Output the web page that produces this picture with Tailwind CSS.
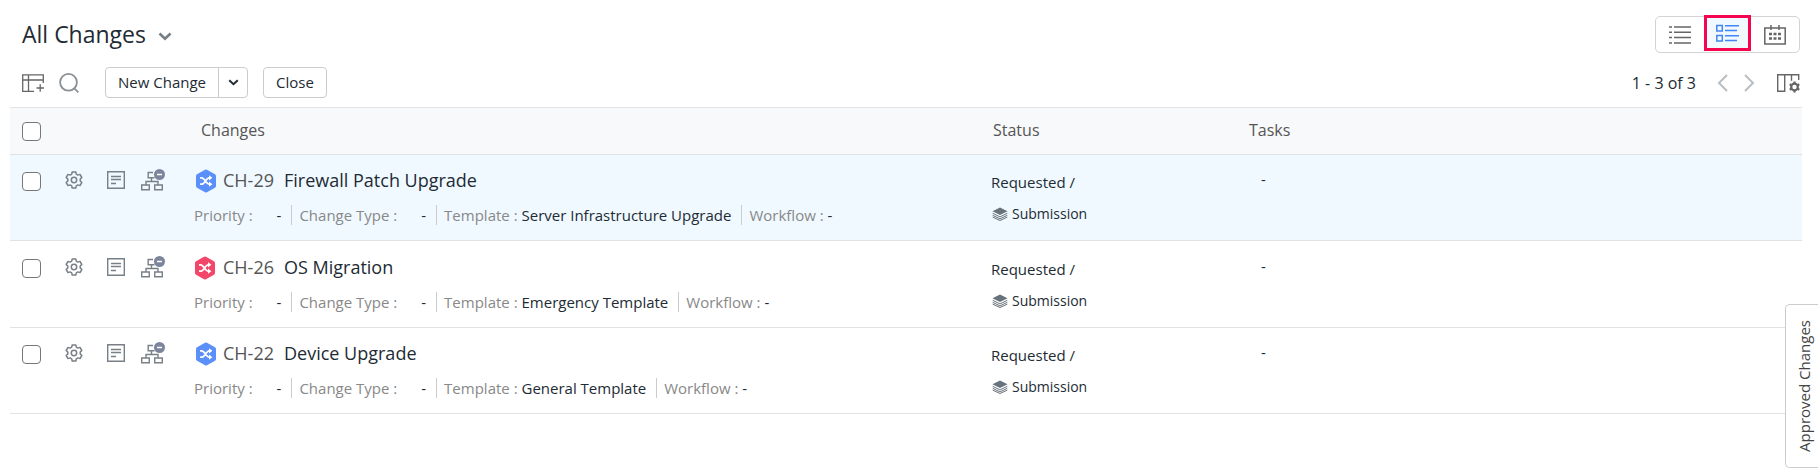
<!DOCTYPE html>
<html lang="en">
<head>
  <meta charset="UTF-8" />
  <meta name="viewport" content="width=device-width, initial-scale=1.0" />
  <title>All Changes</title>
  <script src="https://cdn.jsdelivr.net/npm/@tailwindcss/browser@4"></script>
</head>
<body class="bg-white text-[#222b34] font-['Open_Sans',sans-serif]">
  <!-- Icon sprite -->
  <svg class="hidden" aria-hidden="true">
    <symbol id="gear" viewBox="0 0 18 18">
      <path d="M7.2 1h3.6l.5 2.2 1.5.9 2.2-.7 1.8 3.1-1.6 1.6v1.8l1.6 1.6-1.8 3.1-2.2-.7-1.5.9-.5 2.2H7.2l-.5-2.200-1.500-.9-2.200.7-1.800-3.100 1.600-1.600V8.100L1.200 6.500 3 3.400l2.200.7 1.500-.9z" fill="none" stroke="currentColor" stroke-width="1.500" stroke-linejoin="round" />
      <circle cx="9" cy="9" r="2.700" fill="none" stroke="currentColor" stroke-width="1.500" />
    </symbol>
    <symbol id="note" viewBox="0 0 18 18">
      <path d="M.7.7h16.600v16.600H.7zM4 5.500h10M4 8.500h10M4 12.500h5" fill="none" stroke="currentColor" stroke-width="1.400" />
    </symbol>
    <symbol id="tree" viewBox="0 0 24 22">
      <path d="M12 3.500H7.200v5.300h6.300M10.500 9v3.500M5 16v-3.500h12V16M.7 16h7.600v4.800H.7zM13.700 16h7.600v4.800h-7.600z" fill="none" stroke="currentColor" stroke-width="1.400" />
      <circle cx="18.500" cy="5.500" r="5.500" fill="#7b869c" />
      <path d="M16 5.500h5" stroke="#fff" stroke-width="1.500" />
    </symbol>
    <symbol id="change" viewBox="0 0 22 24">
      <path d="M11 2.500l8 4.400v10.200l-8 4.400-8-4.400V6.900z" fill="currentColor" stroke="currentColor" stroke-width="4" stroke-linejoin="round" />
      <path d="M5 8.800h1.700c3.200 0 4.300 6.400 7.300 6.400h1M5 15.200h1.700c3.200 0 4.300-6.400 7.300-6.400h1" fill="none" stroke="#fff" stroke-width="1.700" />
      <path d="M14 6.200l3.400 2.600-3.400 2.600zM14 12.600l3.400 2.600-3.400 2.600z" fill="#fff" />
    </symbol>
    <symbol id="layers" viewBox="0 0 16 14">
      <path d="M8 .5l7.500 3.700L8 8 .5 4.200z" fill="currentColor" />
      <path d="M.7 6.300L8 9.900l7.300-3.600M.7 8.300L8 11.900l7.300-3.600M.7 10.100L8 13.500l7.300-3.400" fill="none" stroke="currentColor" />
    </symbol>
    <symbol id="chevron" viewBox="0 0 14 9">
      <path d="M1.500 1.500L7 6.700l5.500-5.200" fill="none" stroke="currentColor" stroke-width="2.600" />
    </symbol>
  </svg>

  <main class="pl-[10px] pr-4">
    <!-- Title and view switch -->
    <header class="flex items-start justify-between pl-3 pt-4">
      <button type="button" class="flex items-center gap-3 text-[23px] leading-9">
        <h1>All Changes</h1>
        <svg class="mt-1 h-[9px] w-[14px] text-[#757d85]"><use href="#chevron" /></svg>
      </button>
      <div class="mr-[2px] flex h-[37px] w-[145px] rounded-[5px] border border-[#d3d3d3] text-[#666]">
        <button type="button" aria-label="List view" class="flex w-12 items-center justify-center">
          <svg viewBox="0 0 22 18" class="h-[18px] w-[22px]" fill="none" stroke="currentColor" stroke-width="1.500">
            <path d="M0 1h3M5 1h17M0 6.300h3M5 6.300h17M0 11.600h3M5 11.600h17M0 17h3M5 17h17" />
          </svg>
        </button>
        <button type="button" aria-label="Detailed view" class="-mt-[2px] flex h-9 w-[47px] items-center justify-center border-[3px] border-[#f5054f] bg-[#f0f9ff] text-[#4285f4]">
          <svg viewBox="0 0 23 18" class="h-[18px] w-[23px]" fill="none" stroke="currentColor" stroke-width="1.500">
            <path d="M.8 1.500h5.500V7H.8zM.8 11.500h5.500V17H.8zM9 1.800h14M9 6.500h12M9 11.800h14M9 16.500h12" />
          </svg>
        </button>
        <button type="button" aria-label="Calendar view" class="flex flex-1 items-center justify-center">
          <svg viewBox="0 0 22 20" class="h-5 w-[22px]" fill="none" stroke="currentColor" stroke-width="1.500">
            <path d="M.8 3h20.400v16H.8zM7 0v5M15 0v5" />
            <path d="M5 9h3M9.500 9h3M14 9h3M5 13.500h3M9.500 13.500h3M14 13.500h3" stroke-width="2.500" />
          </svg>
        </button>
      </div>
    </header>

    <!-- Toolbar -->
    <div class="flex items-center justify-between pb-[9px] pl-3 pt-[14px] text-[15px]">
      <div class="flex items-center">
        <button type="button" aria-label="Add column" class="mr-[15px] text-[#666]">
          <svg viewBox="0 0 22 18" class="h-[18px] w-[22px]" fill="none" stroke="currentColor" stroke-width="1.300">
            <path d="M21.300 9V.8H.7v16.500H12M.7 6h20.600M6.500.8v16.500M14.500 14H22M18.200 10.300v7.500" />
          </svg>
        </button>
        <button type="button" aria-label="Search" class="mr-[26px] text-[#8b9095]">
          <svg viewBox="0 0 20 20" class="h-5 w-5" fill="none" stroke="currentColor" stroke-width="1.800">
            <circle cx="9.500" cy="9.300" r="8.400" />
            <path d="M15.300 15.300l4 4" />
          </svg>
        </button>
        <div class="mr-[15px] flex h-[31px] rounded border border-[#ccc]">
          <button type="button" class="px-3">New Change</button>
          <button type="button" aria-label="More options" class="flex w-[29px] items-center justify-center border-l border-[#ccc]">
            <svg class="h-[7px] w-[11px]"><use href="#chevron" /></svg>
          </button>
        </div>
        <button type="button" class="h-[31px] rounded border border-[#ccc] px-3">Close</button>
      </div>
      <div class="mr-[2px] flex items-center">
        <span class="mr-[21px] text-base leading-5">1 - 3 of 3</span>
        <button type="button" aria-label="Previous page" class="mr-4 text-[#b9bec3]">
          <svg viewBox="0 0 11 18" class="h-[18px] w-[11px]" fill="none" stroke="currentColor" stroke-width="2"><path d="M10 1L2 9l8 8" /></svg>
        </button>
        <button type="button" aria-label="Next page" class="mr-[22px] text-[#b9bec3]">
          <svg viewBox="0 0 11 18" class="h-[18px] w-[11px]" fill="none" stroke="currentColor" stroke-width="2"><path d="M1 1l8 8-8 8" /></svg>
        </button>
        <button type="button" aria-label="Column settings" class="text-[#666]">
          <svg viewBox="0 0 23 20" class="h-5 w-[23px]" fill="none" stroke="currentColor" stroke-width="1.400">
            <path d="M.7 1.700h7v16.600h-7zM7.700 1.700h14V7M14.500 1.700v6" />
            <circle cx="17.500" cy="14" r="3.300" stroke-width="2.200" />
            <path d="M17.500 8.500v2M17.500 17.500v2M12.700 11.200l1.800 1M20.500 15.800l1.800 1M12.700 16.800l1.800-1M20.500 12.200l1.800-1" stroke-width="2.200" />
          </svg>
        </button>
      </div>
    </div>

    <!-- Changes table -->
    <table class="w-full table-fixed border-separate border-spacing-0 text-left">
      <thead>
        <tr class="h-12 bg-[#f8f9fb] text-base text-[#555]">
          <th class="w-[45px] border-y border-[#e2e2e2] pl-3"><input type="checkbox" aria-label="Select all changes" class="block h-[19px] w-[19px] appearance-none rounded border border-[#777] bg-white" /></th>
          <th class="w-[139px] border-y border-[#e2e2e2]" aria-label="Actions"></th>
          <th class="w-[797px] border-y border-[#e2e2e2] pb-[2px] pl-[7px] font-normal">Changes</th>
          <th class="w-[256px] border-y border-[#e2e2e2] pb-[2px] pl-[2px] font-normal">Status</th>
          <th class="border-y border-[#e2e2e2] pb-[2px] pl-[2px] font-normal">Tasks</th>
        </tr>
      </thead>
      <tbody class="align-top text-[15px]">
        <tr class="h-[86px] bg-[#f0f9ff]">
          <td class="border-b border-[#e2e2e2] pl-3 pt-[17px]"><input type="checkbox" aria-label="Select CH-29" class="block h-[19px] w-[19px] appearance-none rounded border border-[#777] bg-white" /></td>
          <td class="border-b border-[#e2e2e2] pl-[10px] pt-[14px]">
            <div class="flex items-center text-[#788087]">
              <button type="button" aria-label="Settings" class="mr-6"><svg class="h-[18px] w-[18px]"><use href="#gear" /></svg></button>
              <button type="button" aria-label="Notes" class="mr-4"><svg class="h-[18px] w-[18px]"><use href="#note" /></svg></button>
              <button type="button" aria-label="Relationships"><svg class="h-[22px] w-6"><use href="#tree" /></svg></button>
            </div>
          </td>
          <td class="border-b border-[#e2e2e2] pt-3">
            <div class="flex items-center text-lg leading-[26px]">
              <svg class="ml-px mr-[6px] mt-[2px] h-6 w-[22px] text-[#5b8ff9]"><use href="#change" /></svg>
              <span class="mr-[10px] text-[#555]">CH-29</span>
              <a href="#">Firewall Patch Upgrade</a>
            </div>
            <div class="mt-3 flex leading-5">
              <span class="border-r border-[#ccc] pr-[10px]"><span class="mr-6 text-[#888]">Priority :</span>-</span>
              <span class="border-r border-[#ccc] pl-[7px] pr-[10px]"><span class="mr-6 text-[#888]">Change Type :</span>-</span>
              <span class="border-r border-[#ccc] pl-[7px] pr-[10px]"><span class="text-[#888]">Template :</span> Server Infrastructure Upgrade</span>
              <span class="pl-[7px]"><span class="text-[#888]">Workflow :</span> -</span>
            </div>
          </td>
          <td class="border-b border-[#e2e2e2] pt-[17px] leading-5">
            <div>Requested /</div>
            <div class="mt-3 flex items-center gap-1 pl-px text-sm leading-5"><svg class="h-[14px] w-4 text-[#68727b]"><use href="#layers" /></svg>Submission</div>
          </td>
          <td class="border-b border-[#e2e2e2] pl-[14px] pt-[14px] leading-5">-</td>
        </tr>
        <tr class="h-[87px]">
          <td class="border-b border-[#e2e2e2] pl-3 pt-[18px]"><input type="checkbox" aria-label="Select CH-26" class="block h-[19px] w-[19px] appearance-none rounded border border-[#777] bg-white" /></td>
          <td class="border-b border-[#e2e2e2] pl-[10px] pt-[15px]">
            <div class="flex items-center text-[#788087]">
              <button type="button" aria-label="Settings" class="mr-6"><svg class="h-[18px] w-[18px]"><use href="#gear" /></svg></button>
              <button type="button" aria-label="Notes" class="mr-4"><svg class="h-[18px] w-[18px]"><use href="#note" /></svg></button>
              <button type="button" aria-label="Relationships"><svg class="h-[22px] w-6"><use href="#tree" /></svg></button>
            </div>
          </td>
          <td class="border-b border-[#e2e2e2] pt-[13px]">
            <div class="flex items-center text-lg leading-[26px]">
              <svg class="mr-[7px] mt-[2px] h-6 w-[22px] text-[#f2476a]"><use href="#change" /></svg>
              <span class="mr-[10px] text-[#555]">CH-26</span>
              <a href="#">OS Migration</a>
            </div>
            <div class="mt-3 flex leading-5">
              <span class="border-r border-[#ccc] pr-[10px]"><span class="mr-6 text-[#888]">Priority :</span>-</span>
              <span class="border-r border-[#ccc] pl-[7px] pr-[10px]"><span class="mr-6 text-[#888]">Change Type :</span>-</span>
              <span class="border-r border-[#ccc] pl-[7px] pr-[10px]"><span class="text-[#888]">Template :</span> Emergency Template</span>
              <span class="pl-[7px]"><span class="text-[#888]">Workflow :</span> -</span>
            </div>
          </td>
          <td class="border-b border-[#e2e2e2] pt-[18px] leading-5">
            <div>Requested /</div>
            <div class="mt-3 flex items-center gap-1 pl-px text-sm leading-5"><svg class="h-[14px] w-4 text-[#68727b]"><use href="#layers" /></svg>Submission</div>
          </td>
          <td class="border-b border-[#e2e2e2] pl-[14px] pt-[15px] leading-5">-</td>
        </tr>
        <tr class="h-[86px]">
          <td class="border-b border-[#e2e2e2] pl-3 pt-[17px]"><input type="checkbox" aria-label="Select CH-22" class="block h-[19px] w-[19px] appearance-none rounded border border-[#777] bg-white" /></td>
          <td class="border-b border-[#e2e2e2] pl-[10px] pt-[14px]">
            <div class="flex items-center text-[#788087]">
              <button type="button" aria-label="Settings" class="mr-6"><svg class="h-[18px] w-[18px]"><use href="#gear" /></svg></button>
              <button type="button" aria-label="Notes" class="mr-4"><svg class="h-[18px] w-[18px]"><use href="#note" /></svg></button>
              <button type="button" aria-label="Relationships"><svg class="h-[22px] w-6"><use href="#tree" /></svg></button>
            </div>
          </td>
          <td class="border-b border-[#e2e2e2] pt-3">
            <div class="flex items-center text-lg leading-[26px]">
              <svg class="ml-px mr-[6px] mt-[2px] h-6 w-[22px] text-[#5b8ff9]"><use href="#change" /></svg>
              <span class="mr-[10px] text-[#555]">CH-22</span>
              <a href="#">Device Upgrade</a>
            </div>
            <div class="mt-3 flex leading-5">
              <span class="border-r border-[#ccc] pr-[10px]"><span class="mr-6 text-[#888]">Priority :</span>-</span>
              <span class="border-r border-[#ccc] pl-[7px] pr-[10px]"><span class="mr-6 text-[#888]">Change Type :</span>-</span>
              <span class="border-r border-[#ccc] pl-[7px] pr-[10px]"><span class="text-[#888]">Template :</span> General Template</span>
              <span class="pl-[7px]"><span class="text-[#888]">Workflow :</span> -</span>
            </div>
          </td>
          <td class="border-b border-[#e2e2e2] pt-[17px] leading-5">
            <div>Requested /</div>
            <div class="mt-3 flex items-center gap-1 pl-px text-sm leading-5"><svg class="h-[14px] w-4 text-[#68727b]"><use href="#layers" /></svg>Submission</div>
          </td>
          <td class="border-b border-[#e2e2e2] pl-[14px] pt-[14px] leading-5">-</td>
        </tr>
      </tbody>
    </table>
  </main>

  <!-- Side tab -->
  <button type="button" class="fixed bottom-1 right-0 flex w-[33px] items-center justify-center rounded-l-[5px] border border-r-0 border-[#ccc] bg-white py-[15px] pl-1 text-[15px] text-[#444]">
    <span class="rotate-180 [writing-mode:vertical-rl]">Approved Changes</span>
  </button>
</body>
</html>
